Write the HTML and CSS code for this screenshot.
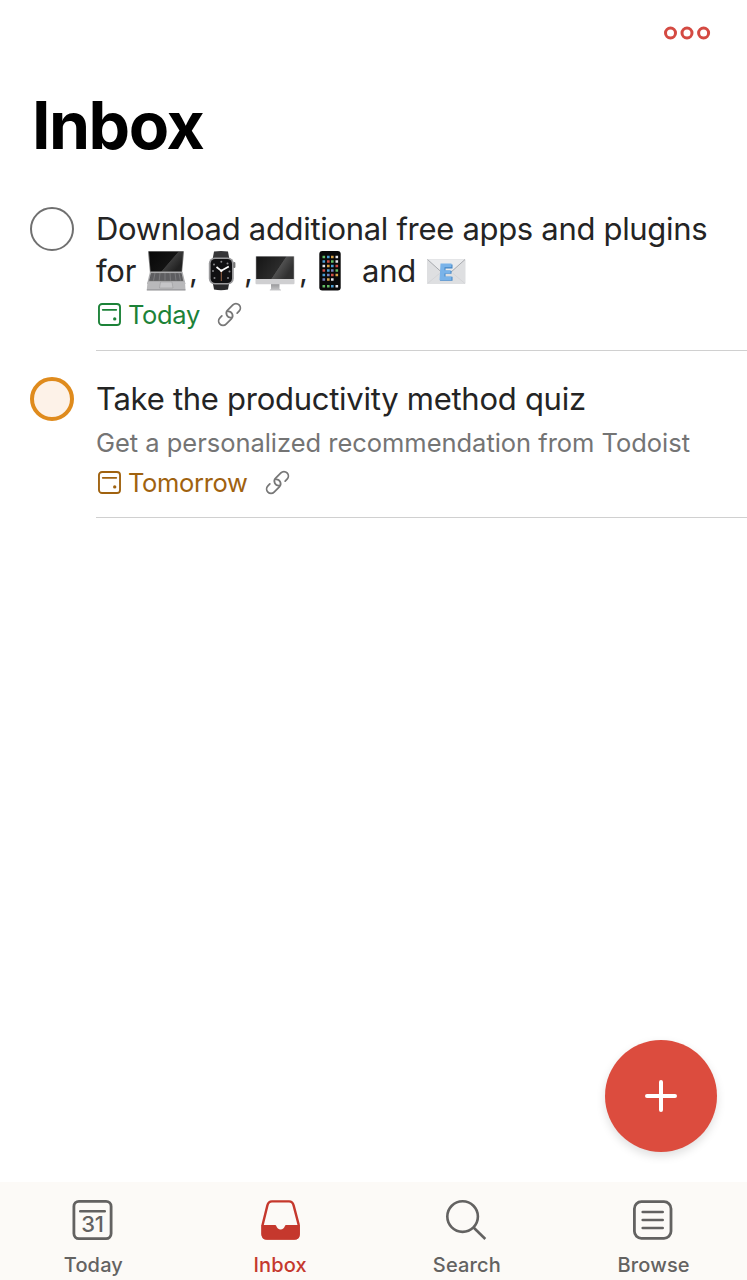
FILE: index.html
```html
<!DOCTYPE html>
<html lang="en">
<head>
<meta charset="utf-8">
<title>Inbox</title>
<link rel="stylesheet" href="styles.css">
</head>
<body>
<svg class="defs" width="0" height="0" aria-hidden="true">
  <defs>
    <linearGradient id="screen" x1="0" y1="0" x2="1" y2=".5"><stop offset="0" stop-color="#080808"/><stop offset=".68" stop-color="#131313"/><stop offset=".7" stop-color="#3c3c3c"/><stop offset="1" stop-color="#222"/></linearGradient>
    <linearGradient id="display" x1="0" y1="0" x2="1" y2=".4"><stop offset="0" stop-color="#151515"/><stop offset=".68" stop-color="#2b2b2b"/><stop offset=".7" stop-color="#505050"/><stop offset="1" stop-color="#303030"/></linearGradient>
    <linearGradient id="stand" x1="0" y1="0" x2="0" y2="1"><stop offset="0" stop-color="#8f8f91"/><stop offset="1" stop-color="#c8c8ca"/></linearGradient>
    <symbol id="calendar" viewBox="0 0 24 24"><rect x="1.9" y="1.9" width="20.2" height="20.2" rx="3" fill="none" stroke="currentColor" stroke-width="1.8"/><path d="M5.5 7.5h13" stroke="currentColor" stroke-width="1.7" stroke-linecap="round"/><circle cx="17" cy="16.2" r="1.6" fill="currentColor"/></symbol>
    <symbol id="link" viewBox="0 0 24 24"><g fill="none" stroke="currentColor" stroke-width="1.7" stroke-linecap="round" transform="translate(12 12) rotate(-45)"><path d="M6.2 4.2H8.8a4.2 4.2 0 0 0 0-8.4H1.7a4.2 4.2 0 0 0-2.7 7.4"/><path d="M-6.2-4.2H-8.8a4.2 4.2 0 0 0 0 8.4H-1.7a4.2 4.2 0 0 0 2.7-7.4"/></g></symbol>
  </defs>
</svg>
<header class="topbar">
  <svg class="more" width="48" height="16" viewBox="0 0 48 16" fill="none" stroke="#d44a42" stroke-width="3"><circle cx="7.5" cy="8" r="5"/><circle cx="24" cy="8" r="5"/><circle cx="40.6" cy="8" r="5"/></svg>
</header>
<h1 class="title">Inbox</h1>
<main class="tasks">
  <article class="task">
    <span class="check"></span>
    <div class="content first">
      <div class="name name-a">Download additional free apps and plugins</div>
      <div class="name second-line">
        <span class="word-for">for</span>
        <svg class="laptop" width="40" height="42" viewBox="0 0 40 42">
          <path d="M2 2Q2 1 3 1h34q1 0 1 1L36 23H4z" fill="#777"/><path d="M3 1.8h34L35.6 21.5H4.6z" fill="url(#screen)"/>
          <path d="M4 21.8h32.5L39.5 34H1z" fill="#aaaaac"/><path d="M5 23.2h30.5l1.7 7.5H3.2z" fill="#4b4b4d"/>
          <path d="M5 25h30.5M4.3 27h32M4 29h33M9 23l-1.5 7.5M14 23l-.8 7.5M19 23v7.5M24 23l.5 7.5M29 23l1 7.5M33 23l1.5 7.5" stroke="#969698" stroke-width=".5"/>
          <path d="M1.5 32H39L39.5 39.5H.8z" fill="#b9b9bb"/><path d="M14.5 32h11.5l1 6H13.5z" fill="#c5c5c7" stroke="#949496" stroke-width=".5"/><path d="M.8 39.2h38.7v1.3H.8z" fill="#8d8d8f"/>
        </svg>
        <span class="comma c1">,</span>
        <svg class="watch" width="28" height="42" viewBox="0 0 28 42">
          <path d="M6 1.5q7-1 14 0l1.5 8h-17z" fill="#363638"/><path d="M4.5 31h17L20 39.5q-7 1.5-14 0z" fill="#29292b"/>
          <rect x=".8" y="7.5" width="25" height="27" rx="6" fill="#9a9a9c"/><rect x="2.6" y="9" width="21.4" height="24" rx="4.5" fill="#101012"/>
          <rect x="25.2" y="12" width="2.2" height="6" rx="1" fill="#777"/>
          <g fill="#858588"><circle cx="13.3" cy="11.7" r="1"/><circle cx="6" cy="14.5" r="1"/><circle cx="5" cy="21" r="1"/><circle cx="6.5" cy="28" r="1"/><circle cx="20" cy="28" r="1"/><circle cx="21.5" cy="21.5" r="1"/><circle cx="19.5" cy="13.5" r="1"/></g>
          <path d="M8.5 17l4.8 3.8 7.5-4.2" fill="none" stroke="#fff" stroke-width="1.7"/><path d="M13.3 20v11" stroke="#a66b49" stroke-width=".9"/><circle cx="13.3" cy="20.8" r="1.2" fill="#fff"/>
        </svg>
        <span class="comma c2">,</span>
        <svg class="desktop" width="40" height="42" viewBox="0 0 40 42">
          <path d="M16 33h8.5v6l1.5.7v.8H14.8v-.8l1.2-.7z" fill="url(#stand)"/><rect x=".5" y="6" width="39" height="28.3" rx="1" fill="#cfcfd1"/><path d="M1.2 6.5h37.6V29H1.2z" fill="url(#display)"/>
        </svg>
        <span class="comma c3">,</span>
        <svg class="phone" width="22" height="42" viewBox="0 0 22 42">
          <rect x=".3" y="1" width="21.4" height="39.6" rx="3" fill="#09090a"/>
          <g transform="translate(1 0)" stroke-width="2.6"><path d="M2.5 7H5.1M11 11.5h2.6M15.5 20.5h2.6M2.5 36.3h2.6M7 36.3h2.6" stroke="#62bd65"/><path d="M7 7h2.6M2.5 11.5h2.6M11 16h2.6M7 20.5h2.6M2.5 25h2.6M11 36.3h2.6" stroke="#4b9ed5"/><path d="M11 7h2.6M7 16h2.6M15.5 25h2.6M7 29.5h2.6" stroke="#d9a348"/><path d="M15.5 7h2.6M2.5 16h2.6M15.5 11.5h2.6M11 29.5h2.6M15.5 36.3h2.6" stroke="#e3e3e8"/><path d="M7 11.5h2.6M15.5 16h2.6M2.5 20.5h2.6M11 25h2.6" stroke="#d04e47"/><path d="M11 20.5h2.6M7 25h2.6M2.5 29.5h2.6" stroke="#7582bd"/></g>
        </svg>
        <span class="word-and">and</span>
        <svg class="mail" width="40" height="42" viewBox="0 0 40 42">
          <rect x="1" y="9" width="38.5" height="25" rx="1" fill="#dedfe1"/><path d="M1.5 9.5l14 12.6Q20 26 25 22.1L39 9.5z" fill="#eaebed"/><path d="M1.5 9.5l14 12.6M25 22.1L39 9.5" fill="none" stroke="#a0a3a7" stroke-width=".9"/><path d="M1.5 33.5l12-10M39 33.5l-12-10" stroke="#cccdd0" stroke-width=".6"/>
          <path d="M15.5 14.5h11v4h-7v2.3h6v3h-6v3h7v4H14z" fill="#4184c4"/><path d="M14.5 13.5h11v3.8h-7v3h6v3.1h-6v3.2h7v3.6H13.5z" fill="#79b3e9"/>
        </svg>
      </div>
      <div class="meta today"><svg class="cal"><use href="#calendar"/></svg><span class="due due-a">Today</span><svg class="link"><use href="#link"/></svg></div>
    </div>
  </article>
  <article class="task">
    <span class="check priority"></span>
    <div class="content second">
      <div class="name name-b">Take the productivity method quiz</div>
      <div class="desc">Get a personalized recommendation from Todoist</div>
      <div class="meta tomorrow"><svg class="cal"><use href="#calendar"/></svg><span class="due due-b">Tomorrow</span><svg class="link"><use href="#link"/></svg></div>
    </div>
  </article>
</main>
<button class="add" aria-label="Add task"><svg width="34" height="34" viewBox="0 0 34 34"><path d="M17 3v28M3 17h28" stroke="#fff" stroke-width="4" stroke-linecap="round"/></svg></button>
<nav class="tabs">
  <a class="tab"><svg width="44" height="44" viewBox="0 0 44 44"><rect x="2.9" y="3.4" width="37.2" height="37.2" rx="5" fill="none" stroke="#636261" stroke-width="2.8"/><path d="M9.3 13.3h24.4" stroke="#636261" stroke-width="2.6" stroke-linecap="round"/><text class="day" x="21.5" y="34" text-anchor="middle">31</text></svg><span>Today</span></a>
  <a class="tab active"><svg width="44" height="44" viewBox="0 0 44 44"><path d="M14 3.4h17q3.6 0 4.6 4l5 19V36q0 4.6-4.6 4.6H9.2Q4.6 40.6 4.6 36v-9L9.4 7.4q1-4 4.6-4z" fill="none" stroke="#c5382d" stroke-width="2.4"/><path d="M3.4 27h13.5a1.6 1.6 0 0 1 1.5 1.3 4.4 4.4 0 0 0 8.4 0 1.6 1.6 0 0 1 1.5-1.3h13.5v9q0 5.6-5.6 5.6H9q-5.6 0-5.6-5.6z" fill="#c5382d"/></svg><span>Inbox</span></a>
  <a class="tab"><svg width="44" height="44" viewBox="0 0 44 44" fill="none" stroke="#636261" stroke-width="2.6"><circle cx="17.6" cy="18.6" r="15.3"/><path d="M28.3 29.3L40.3 41"/></svg><span>Search</span></a>
  <a class="tab"><svg width="44" height="44" viewBox="0 0 44 44" fill="none" stroke="#636261" stroke-width="2.8"><rect x="2.4" y="3.7" width="36.6" height="36.6" rx="7"/><path d="M10.7 14h20M10.7 22h20M10.7 30h20" stroke-linecap="round" stroke-width="2.6"/></svg><span>Browse</span></a>
</nav>
</body>
</html>
```
FILE: styles.css
```css
* { box-sizing: border-box; }
body { margin: 0; width: 747px; height: 1280px; overflow: hidden; background: #fff; color: #242424; font-family: Inter, "Liberation Sans", sans-serif; display: flex; flex-direction: column; }
svg { flex: none; display: block; }
.defs { position: absolute; }
.topbar { height: 65px; padding: 25px 36px 0 0; display: flex; justify-content: flex-end; }
.title { margin: 0; padding-left: 32px; height: 121px; line-height: 120px; color: #000; font-size: 66px; font-weight: 700; letter-spacing: -1.5px; }
.tasks { flex: 1; }
.task { display: flex; padding-left: 30px; }
.check { flex: none; width: 44px; height: 44px; margin: 21px 22px 0 0; border: 2px solid #707070; border-radius: 50%; }
.priority { margin-top: 26px; border: 4px solid #df8b1d; background: #fdf2e8; }
.content { flex: 1; border-bottom: 1px solid #d0d0d0; }
.first { height: 165px; padding-top: 22px; }
.second { height: 167px; padding-top: 27px; }
.name { height: 42px; line-height: 42px; font-size: 31px; white-space: nowrap; }
.name-a { letter-spacing: -.31px; }
.name-b { letter-spacing: -.27px; }
.second-line { display: flex; letter-spacing: -.2px; }
.word-for { width: 50px; }
.comma { width: 22px; padding-left: 3px; }
.c2 { width: 18px; padding-left: 8px; }
.c3 { width: 24px; padding-left: 4px; }
.desktop { margin-left: 1px; }
.word-and { margin-left: 21px; width: 64px; }
.desc { height: 44px; line-height: 46px; font-size: 25.5px; letter-spacing: -.03px; color: #747474; white-space: nowrap; }
.meta { height: 36px; display: flex; align-items: center; font-size: 25.5px; letter-spacing: -.35px; padding-left: 1px; }
.first .meta { margin-top: 4px; }
.cal { width: 25px; height: 25px; }
.link { width: 25px; height: 25px; color: #777; }
.due { margin-left: 6px; }
.due-a { width: 89px; }
.due-b { width: 137px; }
.today { color: #1c8238; }
.tomorrow { color: #a0620f; }
.add { position: absolute; left: 605px; top: 1040px; width: 112px; height: 112px; border: 0; padding: 0; border-radius: 50%; background: #dc4c3e; display: flex; align-items: center; justify-content: center; box-shadow: 0 4px 10px rgba(0,0,0,.13); }
.tabs { height: 98px; background: #fcfaf7; display: grid; grid-template-columns: repeat(4, 1fr); padding-top: 16px; }
.tab { display: flex; flex-direction: column; align-items: center; color: #636261; font-size: 20px; font-weight: 500; line-height: 24px; letter-spacing: .15px; gap: 11px; }
.active { color: #c5382d; }
.day { font-size: 22px; font-weight: 500; fill: #636261; letter-spacing: -.3px; }
```
